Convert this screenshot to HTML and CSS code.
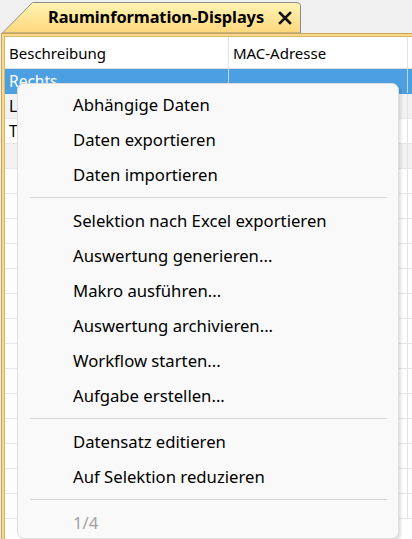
FILE: index.html
```html
<!DOCTYPE html>
<html lang="de">
<head>
<meta charset="utf-8">
<title>Rauminformation-Displays</title>
<link rel="stylesheet" href="styles.css">
</head>
<body>
<div class="window">
  <div class="tabstrip">
    <div class="tab">
      <svg class="tab-shape" width="300" height="31" viewBox="0 0 300 31">
        <defs>
          <linearGradient id="tabfill" x1="0" y1="0" x2="0" y2="1">
            <stop offset="0" stop-color="#fff4b4"/>
            <stop offset="1" stop-color="#ffd77c"/>
          </linearGradient>
        </defs>
        <path d="M0.5 31 L30.5 0.5 L295 0.5 Q298.5 0.5 298.5 4 L298.5 31 Z" fill="url(#tabfill)" stroke="#8c8c8c" stroke-width="1"/>
      </svg>
      <span class="tab-title">Rauminformation-Displays</span>
      <svg class="tab-close" width="14" height="14" viewBox="0 0 14 14">
        <path d="M2 2 L12 12 M12 2 L2 12" stroke="#111" stroke-width="2.6" stroke-linecap="square"/>
      </svg>
    </div>
  </div>

  <div class="frame">
    <div class="grid">
      <div class="row head">
        <div class="cell c1">Beschreibung</div>
        <div class="cell c2">MAC-Adresse</div>
        <div class="cell c3"></div>
      </div>
      <div class="row selected">
        <div class="cell c1">Rechts</div>
        <div class="cell c2"></div>
        <div class="cell c3"></div>
      </div>
      <div class="row alt">
        <div class="cell c1">Links</div>
        <div class="cell c2"></div>
        <div class="cell c3"></div>
      </div>
      <div class="row">
        <div class="cell c1">Tür</div>
        <div class="cell c2"></div>
        <div class="cell c3"></div>
      </div>
      <div class="row alt">
        <div class="cell c1"></div>
        <div class="cell c2"></div>
        <div class="cell c3"></div>
      </div>
      <div class="row"><div class="cell c1"></div><div class="cell c2"></div><div class="cell c3"></div></div>
      <div class="row"><div class="cell c1"></div><div class="cell c2"></div><div class="cell c3"></div></div>
      <div class="row"><div class="cell c1"></div><div class="cell c2"></div><div class="cell c3"></div></div>
      <div class="row"><div class="cell c1"></div><div class="cell c2"></div><div class="cell c3"></div></div>
      <div class="row"><div class="cell c1"></div><div class="cell c2"></div><div class="cell c3"></div></div>
      <div class="row"><div class="cell c1"></div><div class="cell c2"></div><div class="cell c3"></div></div>
      <div class="row"><div class="cell c1"></div><div class="cell c2"></div><div class="cell c3"></div></div>
      <div class="row"><div class="cell c1"></div><div class="cell c2"></div><div class="cell c3"></div></div>
      <div class="row"><div class="cell c1"></div><div class="cell c2"></div><div class="cell c3"></div></div>
      <div class="row"><div class="cell c1"></div><div class="cell c2"></div><div class="cell c3"></div></div>
      <div class="row"><div class="cell c1"></div><div class="cell c2"></div><div class="cell c3"></div></div>
      <div class="row"><div class="cell c1"></div><div class="cell c2"></div><div class="cell c3"></div></div>
      <div class="row"><div class="cell c1"></div><div class="cell c2"></div><div class="cell c3"></div></div>
      <div class="row"><div class="cell c1"></div><div class="cell c2"></div><div class="cell c3"></div></div>
    </div>
  </div>

  <ul class="menu">
    <li class="item">Abhängige Daten</li>
    <li class="item">Daten exportieren</li>
    <li class="item">Daten importieren</li>
    <li class="sep"></li>
    <li class="item">Selektion nach Excel exportieren</li>
    <li class="item">Auswertung generieren...</li>
    <li class="item">Makro ausführen...</li>
    <li class="item">Auswertung archivieren...</li>
    <li class="item">Workflow starten...</li>
    <li class="item">Aufgabe erstellen...</li>
    <li class="sep"></li>
    <li class="item">Datensatz editieren</li>
    <li class="item">Auf Selektion reduzieren</li>
    <li class="sep"></li>
    <li class="item disabled">1/4</li>
  </ul>
</div>
</body>
</html>
```

FILE: styles.css
```css
* {
  box-sizing: border-box;
}

html, body {
  margin: 0;
  padding: 0;
  height: 100%;
  overflow: hidden;
}

body {
  background: #f0f0f0;
  font-family: "Noto Sans", "Open Sans", sans-serif;
  color: #000;
}

.window {
  position: relative;
  width: 412px;
  height: 539px;
  overflow: hidden;
}

/* tab strip */
.tabstrip {
  height: 33px;
  padding: 2px 0 0 2px;
  display: flex;
  align-items: flex-end;
}

.tab {
  position: relative;
  width: 300px;
  height: 31px;
  display: flex;
  align-items: center;
  padding-left: 46px;
  gap: 14px;
}

.tab-shape {
  position: absolute;
  left: 0;
  top: 0;
}

.tab-title {
  position: relative;
  font-weight: 700;
  font-size: 16.4px;
  letter-spacing: -0.1px;
  line-height: 20px;
  margin-top: -1px;
}

.tab-close {
  position: relative;
  margin-top: 1px;
}

/* yellow frame around the grid */
.frame {
  margin-left: 1px;
  border-top: 1px solid #c8a45c;
  border-left: 1px solid #c8a45c;
  background: #f9d88a;
  padding: 2px 0 0 2px;
  height: 506px;
}

.grid {
  height: 100%;
  background: #fff;
  border-top: 1px solid #d9b86c;
  border-left: 1px solid #d9b86c;
  overflow: hidden;
}

.row {
  display: flex;
  height: 25px;
  border-bottom: 1px solid #e6e6e6;
  font-size: 15.5px;
}

.row.head {
  height: 32px;
  border-bottom: 1px solid #dcdcdc;
}

.row.alt {
  background: #f2f2f2;
}

.row.selected {
  background: #4c9fe1;
  color: #fff;
  border-bottom-color: #4c9fe1;
}

.cell {
  display: flex;
  align-items: center;
  padding-left: 4px;
  border-right: 1px solid #e3e3e3;
  white-space: nowrap;
  overflow: hidden;
}

.row.head .cell {
  font-size: 15px;
  padding-top: 1px;
}

.row.selected .cell {
  border-right-color: #b9d8f3;
}

.c1 {
  width: 225px;
}

.c2 {
  width: 180px;
}

.c3 {
  flex: 1;
  border-right: none;
}

/* context menu popped over the grid */
.menu {
  position: absolute;
  left: 17px;
  top: 83px;
  width: 382px;
  height: 456px;
  margin: 0;
  padding: 3px 0 0;
  list-style: none;
  background: #f9f9f9;
  border: 1px solid #dedede;
  border-radius: 7px;
  box-shadow: 2px 2px 3px rgba(0, 0, 0, 0.13);
}

.item {
  height: 35px;
  display: flex;
  align-items: center;
  padding-left: 55px;
  font-size: 16.7px;
  white-space: nowrap;
}

.item.disabled {
  color: #a3a3a3;
}

.sep {
  height: 11px;
  display: flex;
  align-items: center;
  padding: 0 11px 0 12px;
}

.sep::before {
  content: "";
  flex: 1;
  height: 1px;
  background: #d6d6d6;
}
```
